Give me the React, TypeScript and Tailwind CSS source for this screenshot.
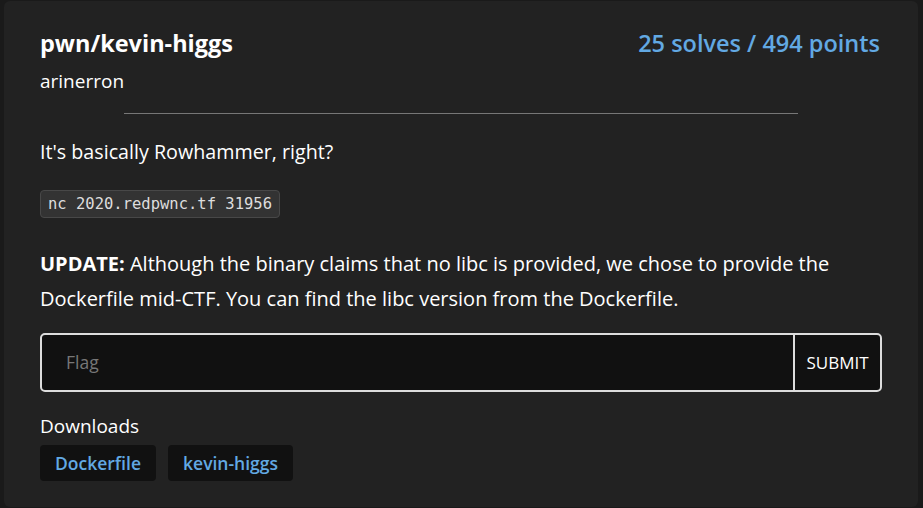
import React from "react";

export default function App() {
  return (
    <div
      className="w-[923px] h-[508px] bg-[#1a1a1a] pt-[1px] pl-[4px] pr-[5px] pb-[1px]"
      style={{ fontFamily: '"Open Sans", "Noto Sans", sans-serif' }}
    >
      <div className="h-full bg-[#222222] rounded-[6px] pl-[36px] pr-[36px] pt-[22px]">
        <div className="flex justify-between items-start">
          <div>
            <div className="text-[23.5px] font-bold text-white leading-[40px]">pwn/kevin-higgs</div>
            <div className="mt-[3px] text-[19px] text-white leading-[30px]">arinerron</div>
          </div>
          <div className="mr-[2px] text-[23.5px] font-semibold text-[#62a9e3] leading-[40px]">25 solves / 494 points</div>
        </div>
        <div className="mx-auto mt-[17px] w-[674px] h-px bg-[#777]" />
        <div className="mt-[24px] text-[19.7px] text-white leading-[28px]">It's basically Rowhammer, right?</div>
        <div className="mt-[24px] flex">
          <span
            className="block bg-[#333] border border-[#484848] rounded-[4px] px-[7px] h-[28px] leading-[26px] text-[15.5px] text-[#ddd]"
            style={{ fontFamily: '"DejaVu Sans Mono", monospace' }}
          >
            nc 2020.redpwnc.tf 31956
          </span>
        </div>
        <div className="mt-[28px] text-[20px] text-white leading-[35px]">
          <b>UPDATE:</b> Although the binary claims that no libc is provided, we chose to provide the Dockerfile mid-CTF. You can find the libc version from the Dockerfile.
        </div>
        <div className="mt-[17px] flex h-[59px] w-[842px] border-2 border-[#ddd] rounded-[5px] bg-[#111] overflow-hidden">
          <div className="flex-1 flex items-center pl-[24px] text-[17.5px] text-[#777]">Flag</div>
          <div className="w-[87px] border-l-2 border-[#ddd] flex items-center justify-center text-[17px] text-white">SUBMIT</div>
        </div>
        <div className="mt-[20px] text-[19px] text-white leading-[28px]">Downloads</div>
        <div className="mt-[5px] flex gap-[12px]">
          <div className="h-[36px] px-[15px] flex items-center bg-[#111] rounded-[4px] text-[17.5px] font-semibold text-[#62a9e3]">Dockerfile</div>
          <div className="h-[36px] px-[15px] flex items-center bg-[#111] rounded-[4px] text-[17.5px] font-semibold text-[#62a9e3]">kevin-higgs</div>
        </div>
      </div>
    </div>
  );
}
